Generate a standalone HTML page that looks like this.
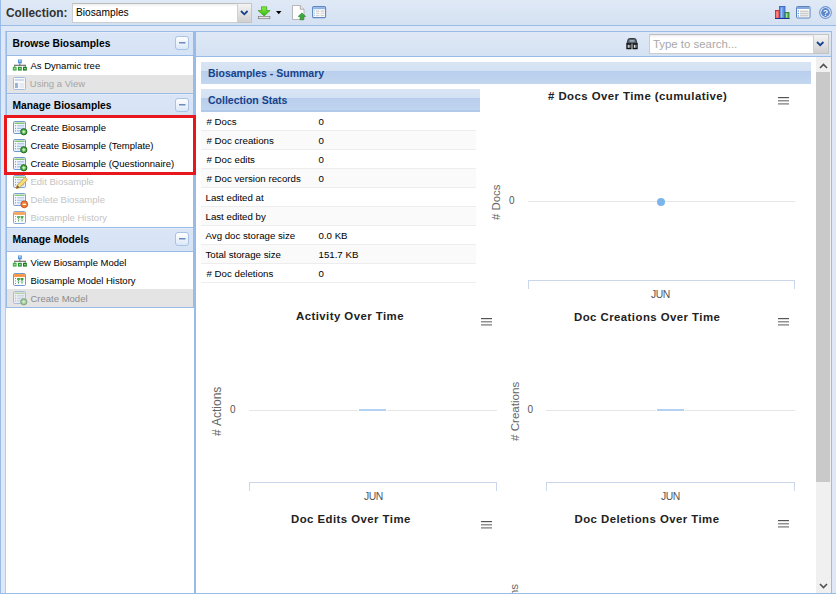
<!DOCTYPE html>
<html><head><meta charset="utf-8">
<style>
*{box-sizing:border-box;margin:0;padding:0}
html,body{width:836px;height:594px;overflow:hidden;background:#dfe8f6;font-family:"Liberation Sans",sans-serif;position:relative}
.a{position:absolute}
.t{position:absolute;white-space:nowrap;line-height:1}
.it{font-size:9.5px;color:#000;left:30.5px}
.dis{color:#c4c4c4}
.hd{font-size:10.3px;font-weight:bold;color:#000;left:12.5px}
.st{font-size:9.7px;color:#000}
.ct{font-size:11.4px;font-weight:bold;color:#222;letter-spacing:0.45px}
.yl{font-size:11.4px;color:#666;transform-origin:0 0;transform:rotate(-90deg)}
.nm{font-size:10px;color:#555}
.jun{font-size:10.4px;color:#555;letter-spacing:-0.5px}
svg{position:absolute;overflow:visible}
</style></head><body>
<svg width="0" height="0" style="position:absolute">
<defs>
<linearGradient id="gb" x1="0" y1="0" x2="1" y2="1"><stop offset="0" stop-color="#ffffff"/><stop offset="1" stop-color="#dce8f8"/></linearGradient>
<symbol id="grid" viewBox="0 0 13 13">
 <rect x="0.5" y="0.5" width="12" height="12" rx="1.3" fill="url(#gb)" stroke="#6f98d4"/>
 <rect x="1.5" y="1.6" width="10" height="1.3" fill="#78c05e"/>
 <rect x="2" y="4.3" width="1" height="1" fill="#5d90d8"/><rect x="4" y="4.3" width="7" height="1" fill="#9ab8e4"/>
 <rect x="2" y="6.8" width="1" height="1" fill="#5d90d8"/><rect x="4" y="6.8" width="7" height="1" fill="#9ab8e4"/>
 <rect x="2" y="9.3" width="1" height="1" fill="#5d90d8"/><rect x="4" y="9.3" width="7" height="1" fill="#9ab8e4"/>
</symbol>
</defs></svg>

<div class="a" style="left:0;top:0;width:1px;height:594px;background:#99bbe8"></div>
<div class="a" style="left:1px;top:0;width:835px;height:25px;background:linear-gradient(#e0e9f6,#d4e1f2)"></div>
<div class="a" style="left:0;top:25px;width:836px;height:1px;background:#99bbe8"></div>
<div class="t" style="left:6px;top:8.43px;font-size:11.9px;font-weight:bold;color:#333">Collection:</div>
<div class="a" style="left:72px;top:3px;width:166px;height:20px;background:linear-gradient(#ececec,#fff 3px);border:1px solid #cdcdcd;border-right:none;border-top-color:#bdbdbd"></div>
<div class="t" style="left:76px;top:8.27px;font-size:10.2px;color:#000">Biosamples</div>
<div class="a" style="left:237px;top:3px;width:15px;height:20px;background:linear-gradient(#f4f4f4,#d0d0d0);border:1px solid #c4c4c4;border-left-color:#d0d0d0"></div>
<svg style="left:239.5px;top:10px" width="9" height="6"><path d="M1 1 L4.3 4.3 L7.6 1" stroke="#15428b" stroke-width="1.8" fill="none"/></svg>
<svg style="left:257px;top:6px" width="14" height="14">
 <defs><linearGradient id="dg" x1="0" y1="0" x2="0" y2="1"><stop offset="0" stop-color="#8df04a"/><stop offset="1" stop-color="#2fb80c"/></linearGradient></defs>
 <path d="M4.5 0.8 H9.7 V4.6 H13.1 L7.1 9.9 L1.1 4.6 H4.5 Z" fill="url(#dg)" stroke="#3a9a12" stroke-width="0.7"/>
 <rect x="1.3" y="10.6" width="11.6" height="2.1" fill="#e6e6e6" stroke="#7a7a7a" stroke-width="0.7"/>
</svg>
<svg style="left:276px;top:11px" width="6" height="4"><path d="M0 0 H5.5 L2.75 3.2 Z" fill="#000"/></svg>
<svg style="left:291px;top:5px" width="16" height="16">
 <path d="M1.5 0.5 H9.3 L13 4.2 V14.5 H1.5 Z" fill="#fdfdfd" stroke="#b0b0b0" stroke-width="0.9"/>
 <path d="M9.3 0.5 V4.2 H13" fill="#ececec" stroke="#a8a8a8"/>
 <path d="M10.9 8 L14.6 11.4 H12.7 V14.8 H9.1 V11.4 H7.2 Z" fill="#3da83d" stroke="#237a23" stroke-width="0.6"/>
</svg>
<svg style="left:312px;top:6px" width="15" height="13">
 <rect x="0.6" y="0.6" width="13" height="11" rx="1.2" fill="#fff" stroke="#5f86c2" stroke-width="1.1"/>
 <rect x="1.2" y="1.2" width="11.8" height="2" fill="#8fb2e4"/>
 <rect x="4" y="4.4" width="3.5" height="1.4" fill="#cfcfcf"/><rect x="8.5" y="4.4" width="4" height="1.4" fill="#cfcfcf"/>
 <rect x="4" y="6.6" width="3.5" height="1.4" fill="#d8d8d8"/><rect x="8.5" y="6.6" width="4" height="1.4" fill="#d8d8d8"/>
 <rect x="4" y="8.8" width="3.5" height="1.4" fill="#cfcfcf"/><rect x="8.5" y="8.8" width="4" height="1.4" fill="#cfcfcf"/>
 <rect x="1.8" y="4.4" width="1" height="1" fill="#6fb0f0"/><rect x="1.8" y="6.6" width="1" height="1" fill="#6fb0f0"/><rect x="1.8" y="8.8" width="1" height="1" fill="#6fb0f0"/>
</svg>
<svg style="left:775px;top:6px" width="15" height="13">
 <rect x="0.5" y="4.5" width="4" height="8" fill="#f05a5a" stroke="#c02020" stroke-width="0.8"/>
 <rect x="4.5" y="0.5" width="5.5" height="12" fill="#5d8fe0" stroke="#2a5cc0" stroke-width="0.8"/>
 <rect x="10" y="6.5" width="4" height="6" fill="#5cb85c" stroke="#267a26" stroke-width="0.8"/>
 <rect x="1.5" y="5.5" width="1.2" height="6" fill="#ff9a9a"/><rect x="5.8" y="1.5" width="1.5" height="10" fill="#9cc0f5"/><rect x="11" y="7.5" width="1.2" height="4" fill="#a8e0a8"/>
 <rect x="0" y="12" width="14.5" height="1" fill="#1a2f8a"/>
</svg>
<svg style="left:796px;top:6px" width="15" height="13">
 <rect x="0.5" y="0.5" width="13.5" height="11.5" rx="1" fill="#fff" stroke="#5a82bd"/>
 <rect x="1" y="1" width="12.5" height="2" fill="#86a9dc"/>
 <rect x="4" y="4.5" width="8.5" height="6" fill="#cfcfcf"/>
 <rect x="4" y="6" width="8.5" height="0.8" fill="#eee"/><rect x="4" y="8" width="8.5" height="0.8" fill="#eee"/>
 <circle cx="2.3" cy="5" r="0.7" fill="#4a90e2"/><circle cx="2.3" cy="7.5" r="0.7" fill="#4a90e2"/><circle cx="2.3" cy="10" r="0.7" fill="#4a90e2"/>
</svg>
<svg style="left:819px;top:6px" width="14" height="14">
 <circle cx="6.5" cy="6.5" r="6.4" fill="#6f97d0"/>
 <circle cx="6.5" cy="6.5" r="5.3" fill="#e8eff9"/>
 <circle cx="6.5" cy="6.5" r="4.4" fill="#5b8ad0"/>
 <text x="6.5" y="10" font-family="Liberation Sans" font-weight="bold" font-size="9" fill="#fff" stroke="#2a5598" stroke-width="0.7" paint-order="stroke" text-anchor="middle">?</text>
</svg>
<div class="a" style="left:5px;top:31px;width:190px;height:563px;background:#fff;border:1px solid #b3cbee;border-right-color:#99bbe8;border-top-color:#99bbe8"></div>
<div class="a" style="left:195px;top:31px;width:637px;height:563px;background:#fff;border:1px solid #99bbe8"></div>
<div class="a" style="left:6px;top:31px;width:188px;height:63px;border:1px solid #99bbe8;background:#fff"></div>
<div class="a" style="left:7px;top:32px;width:186px;height:23px;background:linear-gradient(#e4edf9 0px,#e4edf9 1px,#dae6f6 1px,#d6e3f5 100%)"></div>
<div class="a" style="left:7px;top:55px;width:186px;height:1px;background:#99bbe8"></div>
<div class="a" style="left:7px;top:75px;width:186px;height:18px;background:#e4e4e4"></div>
<div class="a" style="left:175px;top:36px;width:14px;height:14px;border:1px solid #a9c2e6;border-radius:3px;background:linear-gradient(#fff,#dbe8f8)"></div>
<svg style="left:179px;top:42px" width="7" height="2"><rect x="0" y="0" width="6.5" height="1.5" fill="#6b8cbf"/></svg>
<div class="t hd" style="top:38.58px">Browse Biosamples</div>
<div class="a" style="left:6px;top:93px;width:188px;height:136px;border:1px solid #99bbe8;background:#fff"></div>
<div class="a" style="left:7px;top:94px;width:186px;height:23px;background:linear-gradient(#e4edf9 0px,#e4edf9 1px,#dae6f6 1px,#d6e3f5 100%)"></div>
<div class="a" style="left:7px;top:117px;width:186px;height:1px;background:#99bbe8"></div>
<div class="a" style="left:175px;top:98px;width:14px;height:14px;border:1px solid #a9c2e6;border-radius:3px;background:linear-gradient(#fff,#dbe8f8)"></div>
<svg style="left:179px;top:104px" width="7" height="2"><rect x="0" y="0" width="6.5" height="1.5" fill="#6b8cbf"/></svg>
<div class="t hd" style="top:100.58px">Manage Biosamples</div>
<div class="a" style="left:6px;top:227px;width:188px;height:81px;border:1px solid #99bbe8;background:#fff"></div>
<div class="a" style="left:7px;top:228px;width:186px;height:23px;background:linear-gradient(#e4edf9 0px,#e4edf9 1px,#dae6f6 1px,#d6e3f5 100%)"></div>
<div class="a" style="left:7px;top:251px;width:186px;height:1px;background:#99bbe8"></div>
<div class="a" style="left:7px;top:289px;width:186px;height:18px;background:#e4e4e4"></div>
<div class="a" style="left:175px;top:232px;width:14px;height:14px;border:1px solid #a9c2e6;border-radius:3px;background:linear-gradient(#fff,#dbe8f8)"></div>
<svg style="left:179px;top:238px" width="7" height="2"><rect x="0" y="0" width="6.5" height="1.5" fill="#6b8cbf"/></svg>
<div class="t hd" style="top:234.78px">Manage Models</div>
<svg style="left:12px;top:59px" width="16" height="13">
 <rect x="6" y="0.5" width="3.8" height="3.8" fill="#4d8fe0"/><rect x="6.8" y="1.2" width="2" height="1.4" fill="#c4def9"/>
 <rect x="7.4" y="4.3" width="0.9" height="1.8" fill="#555"/>
 <rect x="2.3" y="5.8" width="11.4" height="0.9" fill="#444"/>
 <rect x="2.3" y="5.8" width="0.9" height="2" fill="#666"/><rect x="12.8" y="5.8" width="0.9" height="2" fill="#666"/>
 <rect x="0.8" y="7.8" width="3.8" height="3.8" fill="#3fae3f"/><rect x="6" y="7.8" width="3.8" height="3.8" fill="#27962a"/><rect x="11" y="7.8" width="3.8" height="3.8" fill="#1a7d1d"/>
 <rect x="1.8" y="9.3" width="1.8" height="0.9" fill="#c9f2c9"/><rect x="7" y="9.3" width="1.8" height="0.9" fill="#c9f2c9"/><rect x="12" y="9.3" width="1.8" height="0.9" fill="#c9f2c9"/>
</svg>
<div class="t it" style="top:61.26px">As Dynamic tree</div>
<svg style="left:13px;top:77px;opacity:0.75" width="13" height="13">
 <rect x="0.5" y="0.5" width="12" height="12" rx="1" fill="#fff" stroke="#8eaedc"/>
 <rect x="2" y="2" width="9" height="2" fill="#c9daf2"/>
 <rect x="2" y="6" width="3" height="5" fill="#7fa2d4"/>
 <rect x="6.5" y="6" width="4.5" height="5" fill="#e6eef8"/>
</svg>
<div class="t it" style="left:29.8px;top:79.26px;color:#a4a4a4">Using a View</div>
<svg style="left:13px;top:121px;opacity:1" width="15" height="15"><use href="#grid" x="0" y="0" width="13" height="13"/><circle cx="10.8" cy="10.8" r="3.1" fill="#55b045" stroke="#1a6a1a" stroke-width="1"/><rect x="9.2" y="10.3" width="3.2" height="1" fill="#e0f5d8"/><rect x="10.3" y="9.2" width="1" height="3.2" fill="#e0f5d8"/></svg>
<div class="t it" style="top:123.26px">Create Biosample</div>
<svg style="left:13px;top:139px;opacity:1" width="15" height="15"><use href="#grid" x="0" y="0" width="13" height="13"/><circle cx="10.8" cy="10.8" r="3.1" fill="#55b045" stroke="#1a6a1a" stroke-width="1"/><rect x="9.2" y="10.3" width="3.2" height="1" fill="#e0f5d8"/><rect x="10.3" y="9.2" width="1" height="3.2" fill="#e0f5d8"/></svg>
<div class="t it" style="top:141.26px">Create Biosample (Template)</div>
<svg style="left:13px;top:157px;opacity:1" width="15" height="15"><use href="#grid" x="0" y="0" width="13" height="13"/><circle cx="10.8" cy="10.8" r="3.1" fill="#55b045" stroke="#1a6a1a" stroke-width="1"/><rect x="9.2" y="10.3" width="3.2" height="1" fill="#e0f5d8"/><rect x="10.3" y="9.2" width="1" height="3.2" fill="#e0f5d8"/></svg>
<div class="t it" style="top:159.26px">Create Biosample (Questionnaire)</div>
<svg style="left:13px;top:175px;opacity:0.9" width="15" height="15"><use href="#grid" x="0" y="0" width="13" height="13"/><path d="M3.2 13.6 L4.2 10.2 L11.3 3.1 Q12.2 2.3 13.1 3.1 L13.8 3.8 Q14.6 4.7 13.8 5.6 L6.7 12.6 Z" fill="#f5dc6a" stroke="#c8902a" stroke-width="0.9"/><path d="M3.2 13.6 L4.2 10.2 L6.7 12.6 Z" fill="#6a4a2a"/></svg>
<div class="t it dis" style="top:177.46px">Edit Biosample</div>
<svg style="left:13px;top:193px;opacity:0.9" width="15" height="15"><use href="#grid" x="0" y="0" width="13" height="13"/><circle cx="11.3" cy="11.3" r="3.4" fill="#f0701e" stroke="#b03a0a" stroke-width="0.9"/><rect x="9.6" y="10.7" width="3.4" height="1.2" fill="#fff"/></svg>
<div class="t it dis" style="top:195.46px">Delete Biosample</div>
<svg style="left:13px;top:211px;opacity:0.85" width="13" height="13">
 <rect x="0.5" y="0.5" width="12" height="12" rx="1.2" fill="#fff" stroke="#6f98d4"/>
 <rect x="1.1" y="1.1" width="10.8" height="2.8" fill="#f7943e"/>
 <rect x="2" y="5" width="1" height="1" fill="#5d90d8"/><rect x="2" y="7.5" width="1" height="1" fill="#5d90d8"/><rect x="2" y="10" width="1" height="1" fill="#5d90d8"/>
 <path d="M4 5 H7 V6.5 L6 7.5 V10.5 H5 V7.5 L4 6.5 Z" fill="#4aa84a"/>
 <path d="M7.5 5 H10.5 V6.5 L9.5 7.5 V10.5 H8.5 V7.5 L7.5 6.5 Z" fill="#3a983a"/>
 <rect x="4" y="8" width="7" height="0.7" fill="#c8d8ee"/>
</svg>
<div class="t it dis" style="top:213.46px">Biosample History</div>
<svg style="left:12px;top:255px" width="16" height="13">
 <rect x="6" y="0.5" width="3.8" height="3.8" fill="#4d8fe0"/><rect x="6.8" y="1.2" width="2" height="1.4" fill="#c4def9"/>
 <rect x="7.4" y="4.3" width="0.9" height="1.8" fill="#555"/>
 <rect x="2.3" y="5.8" width="11.4" height="0.9" fill="#444"/>
 <rect x="2.3" y="5.8" width="0.9" height="2" fill="#666"/><rect x="12.8" y="5.8" width="0.9" height="2" fill="#666"/>
 <rect x="0.8" y="7.8" width="3.8" height="3.8" fill="#3fae3f"/><rect x="6" y="7.8" width="3.8" height="3.8" fill="#27962a"/><rect x="11" y="7.8" width="3.8" height="3.8" fill="#1a7d1d"/>
 <rect x="1.8" y="9.3" width="1.8" height="0.9" fill="#c9f2c9"/><rect x="7" y="9.3" width="1.8" height="0.9" fill="#c9f2c9"/><rect x="12" y="9.3" width="1.8" height="0.9" fill="#c9f2c9"/>
</svg>
<div class="t it" style="top:258.06px">View Biosample Model</div>
<svg style="left:13px;top:273px;opacity:1" width="13" height="13">
 <rect x="0.5" y="0.5" width="12" height="12" rx="1.2" fill="#fff" stroke="#6f98d4"/>
 <rect x="1.1" y="1.1" width="10.8" height="2.8" fill="#f7943e"/>
 <rect x="2" y="5" width="1" height="1" fill="#5d90d8"/><rect x="2" y="7.5" width="1" height="1" fill="#5d90d8"/><rect x="2" y="10" width="1" height="1" fill="#5d90d8"/>
 <path d="M4 5 H7 V6.5 L6 7.5 V10.5 H5 V7.5 L4 6.5 Z" fill="#4aa84a"/>
 <path d="M7.5 5 H10.5 V6.5 L9.5 7.5 V10.5 H8.5 V7.5 L7.5 6.5 Z" fill="#3a983a"/>
 <rect x="4" y="8" width="7" height="0.7" fill="#c8d8ee"/>
</svg>
<div class="t it" style="top:276.06px">Biosample Model History</div>
<svg style="left:13px;top:291px;opacity:0.5" width="15" height="15"><use href="#grid" x="0" y="0" width="13" height="13"/><circle cx="10.8" cy="10.8" r="3.1" fill="#55b045" stroke="#1a6a1a" stroke-width="1"/><rect x="9.2" y="10.3" width="3.2" height="1" fill="#e0f5d8"/><rect x="10.3" y="9.2" width="1" height="3.2" fill="#e0f5d8"/></svg>
<div class="t it" style="top:294.06px;color:#8c8c8c">Create Model</div>
<div class="a" style="left:4px;top:115px;width:192px;height:60px;border:3px solid #e8161d"></div>
<div class="a" style="left:196px;top:32px;width:635px;height:24px;background:linear-gradient(#dfe8f6,#d5e2f3)"></div>
<div class="a" style="left:196px;top:56px;width:635px;height:1px;background:#99bbe8"></div>
<svg style="left:626px;top:37.5px" width="12" height="12">
 <path d="M0.8 5.8 L2.2 1.2 Q2.6 0.5 3.5 0.5 H8.5 Q9.4 0.5 9.8 1.2 L11.2 5.8 Z" fill="#56616e" stroke="#1e1e1e" stroke-width="0.8"/>
 <rect x="3.5" y="2" width="5" height="1.8" fill="#9aa9bb"/>
 <rect x="0.3" y="5.3" width="5.3" height="6" rx="0.6" fill="#151515"/>
 <rect x="6.4" y="5.3" width="5.3" height="6" rx="0.6" fill="#151515"/>
 <rect x="5.5" y="5.5" width="1" height="5.5" fill="#8a8a8a"/>
 <rect x="1.7" y="6.8" width="1.2" height="3" fill="#d8dde2"/><rect x="3.2" y="6.8" width="1.2" height="3" fill="#aab2ba"/>
 <rect x="7.8" y="6.8" width="1.2" height="3" fill="#d8dde2"/><rect x="9.3" y="6.8" width="1.2" height="3" fill="#aab2ba"/>
</svg>
<div class="a" style="left:649px;top:34px;width:165px;height:20px;background:linear-gradient(#ececec,#fff 3px);border:1px solid #cdcdcd;border-right:none;border-top-color:#bdbdbd"></div>
<div class="t" style="left:653px;top:38.65px;font-size:11.4px;color:#a8a8a8">Type to search...</div>
<div class="a" style="left:813px;top:34px;width:16px;height:20px;background:linear-gradient(#f4f4f4,#d0d0d0);border:1px solid #c4c4c4;border-left-color:#d0d0d0"></div>
<svg style="left:816px;top:41px" width="9" height="6"><path d="M1 1 L4.2 4.2 L7.4 1" stroke="#15428b" stroke-width="1.8" fill="none"/></svg>
<div class="a" style="left:816px;top:57px;width:15px;height:536px;background:#f0f0f0"></div>
<div class="a" style="left:816px;top:72px;width:14px;height:410px;background:#c9c9c9"></div>
<svg style="left:819px;top:63px" width="9" height="6"><path d="M1 5 L4.5 1.5 L8 5" stroke="#505050" stroke-width="1.6" fill="none"/></svg>
<svg style="left:819px;top:583px" width="9" height="6"><path d="M1 1 L4.5 4.5 L8 1" stroke="#505050" stroke-width="1.6" fill="none"/></svg>
<div class="a" style="left:201px;top:62px;width:610px;height:22px;background:linear-gradient(#d9e5f4 0,#d3e1f3 9px,#b3cbeb 9px,#b9cfed 10px,#c2d6ef 100%)"></div>
<div class="t" style="left:208px;top:68.11px;font-size:10.5px;font-weight:bold;color:#15428b">Biosamples - Summary</div>
<div class="a" style="left:201px;top:89px;width:279px;height:23px;background:linear-gradient(#d9e5f4 0,#d3e1f3 9px,#b3cbeb 9px,#b9cfed 10px,#c2d6ef 100%)"></div>
<div class="a" style="left:201px;top:110px;width:279px;height:2px;background:#b2c9ea"></div>
<div class="t" style="left:208px;top:94.81px;font-size:10.5px;font-weight:bold;color:#15428b">Collection Stats</div>
<div class="a" style="left:201px;top:112px;width:275px;height:19px;background:#fff;border-bottom:1px solid #ededed"></div>
<div class="t st" style="left:206.5px;top:117.09px"># Docs</div>
<div class="t st" style="left:318.5px;top:117.09px">0</div>
<div class="a" style="left:201px;top:131px;width:275px;height:19px;background:#fafafa;border-bottom:1px solid #ededed"></div>
<div class="t st" style="left:206.5px;top:136.09px"># Doc creations</div>
<div class="t st" style="left:318.5px;top:136.09px">0</div>
<div class="a" style="left:201px;top:150px;width:275px;height:19px;background:#fff;border-bottom:1px solid #ededed"></div>
<div class="t st" style="left:206.5px;top:155.09px"># Doc edits</div>
<div class="t st" style="left:318.5px;top:155.09px">0</div>
<div class="a" style="left:201px;top:169px;width:275px;height:19px;background:#fafafa;border-bottom:1px solid #ededed"></div>
<div class="t st" style="left:206.5px;top:174.09px"># Doc version records</div>
<div class="t st" style="left:318.5px;top:174.09px">0</div>
<div class="a" style="left:201px;top:188px;width:275px;height:19px;background:#fff;border-bottom:1px solid #ededed"></div>
<div class="t st" style="left:205.5px;top:193.09px">Last edited at</div>
<div class="a" style="left:201px;top:207px;width:275px;height:19px;background:#fafafa;border-bottom:1px solid #ededed"></div>
<div class="t st" style="left:205.5px;top:212.09px">Last edited by</div>
<div class="a" style="left:201px;top:226px;width:275px;height:19px;background:#fff;border-bottom:1px solid #ededed"></div>
<div class="t st" style="left:205.5px;top:231.09px">Avg doc storage size</div>
<div class="t st" style="left:318.5px;top:231.09px">0.0 KB</div>
<div class="a" style="left:201px;top:245px;width:275px;height:19px;background:#fafafa;border-bottom:1px solid #ededed"></div>
<div class="t st" style="left:205.5px;top:250.09px">Total storage size</div>
<div class="t st" style="left:318.5px;top:250.09px">151.7 KB</div>
<div class="a" style="left:201px;top:264px;width:275px;height:19px;background:#fff;border-bottom:1px solid #ededed"></div>
<div class="t st" style="left:206.5px;top:269.09px"># Doc deletions</div>
<div class="t st" style="left:318.5px;top:269.09px">0</div>
<div class="t ct" style="left:548px;top:90.65px">#&nbsp;Docs Over Time (cumulative)</div>
<svg style="left:778px;top:97px" width="11" height="8"><rect x="0" y="0" width="11" height="1.2" fill="#555"/><rect x="0" y="3.2" width="11" height="1.2" fill="#777"/><rect x="0" y="6.3" width="11" height="1.2" fill="#777"/></svg>
<div class="t yl" style="left:491px;top:219.5px">#&nbsp;Docs</div>
<div class="t nm" style="left:509px;top:195.94px">0</div>
<div class="a" style="left:528px;top:201px;width:267px;height:1px;background:#e6e6e6"></div>
<svg style="left:657px;top:197.5px" width="8" height="8"><circle cx="4" cy="4" r="4" fill="#7cb5ec"/></svg>
<div class="a" style="left:528px;top:280px;width:267px;height:1px;background:#ccd6eb"></div>
<div class="a" style="left:528px;top:280px;width:1px;height:9px;background:#ccd6eb"></div>
<div class="a" style="left:794px;top:280px;width:1px;height:9px;background:#ccd6eb"></div>
<div class="t jun" style="left:651px;top:289.8px">JUN</div>
<div class="t ct" style="left:296px;top:310.95px">Activity Over Time</div>
<svg style="left:481px;top:318px" width="11" height="8"><rect x="0" y="0" width="11" height="1.2" fill="#555"/><rect x="0" y="3.2" width="11" height="1.2" fill="#777"/><rect x="0" y="6.3" width="11" height="1.2" fill="#777"/></svg>
<div class="t yl" style="left:211px;top:435.5px;font-size:12px">#&nbsp;Actions</div>
<div class="t nm" style="left:230px;top:404.54px">0</div>
<div class="a" style="left:249px;top:410px;width:248px;height:1px;background:#e6e6e6"></div>
<div class="a" style="left:358px;top:408px;width:29px;height:4px;background:#fff"></div>
<div class="a" style="left:359px;top:409px;width:27px;height:2px;background:#b3d2f3"></div>
<div class="a" style="left:249px;top:482px;width:248px;height:1px;background:#ccd6eb"></div>
<div class="a" style="left:249px;top:482px;width:1px;height:9px;background:#ccd6eb"></div>
<div class="a" style="left:496px;top:482px;width:1px;height:9px;background:#ccd6eb"></div>
<div class="t jun" style="left:364px;top:491.8px">JUN</div>
<div class="t ct" style="left:574px;top:311.55px">Doc Creations Over Time</div>
<svg style="left:778px;top:318px" width="11" height="8"><rect x="0" y="0" width="11" height="1.2" fill="#555"/><rect x="0" y="3.2" width="11" height="1.2" fill="#777"/><rect x="0" y="6.3" width="11" height="1.2" fill="#777"/></svg>
<div class="t yl" style="left:509px;top:440.5px;font-size:11.6px">#&nbsp;Creations</div>
<div class="t nm" style="left:527.5px;top:404.54px">0</div>
<div class="a" style="left:546px;top:410px;width:249px;height:1px;background:#e6e6e6"></div>
<div class="a" style="left:656px;top:408px;width:29px;height:4px;background:#fff"></div>
<div class="a" style="left:657px;top:409px;width:27px;height:2px;background:#b3d2f3"></div>
<div class="a" style="left:546px;top:482px;width:249px;height:1px;background:#ccd6eb"></div>
<div class="a" style="left:546px;top:482px;width:1px;height:9px;background:#ccd6eb"></div>
<div class="a" style="left:794px;top:482px;width:1px;height:9px;background:#ccd6eb"></div>
<div class="t jun" style="left:661px;top:491.8px">JUN</div>
<div class="t ct" style="left:291px;top:513.85px">Doc Edits Over Time</div>
<svg style="left:481px;top:521px" width="11" height="8"><rect x="0" y="0" width="11" height="1.2" fill="#555"/><rect x="0" y="3.2" width="11" height="1.2" fill="#777"/><rect x="0" y="6.3" width="11" height="1.2" fill="#777"/></svg>
<div class="t ct" style="left:574.5px;top:513.85px">Doc Deletions Over Time</div>
<svg style="left:778px;top:520px" width="11" height="8"><rect x="0" y="0" width="11" height="1.2" fill="#555"/><rect x="0" y="3.2" width="11" height="1.2" fill="#777"/><rect x="0" y="6.3" width="11" height="1.2" fill="#777"/></svg>
<div class="t yl" style="left:508px;top:641.5px;font-size:11.6px">#&nbsp;Deletions</div>
<div class="a" style="left:0;top:593px;width:836px;height:1px;background:#99bbe8"></div>
<div class="a" style="left:831px;top:31px;width:1px;height:563px;background:#99bbe8"></div>
</body></html>
